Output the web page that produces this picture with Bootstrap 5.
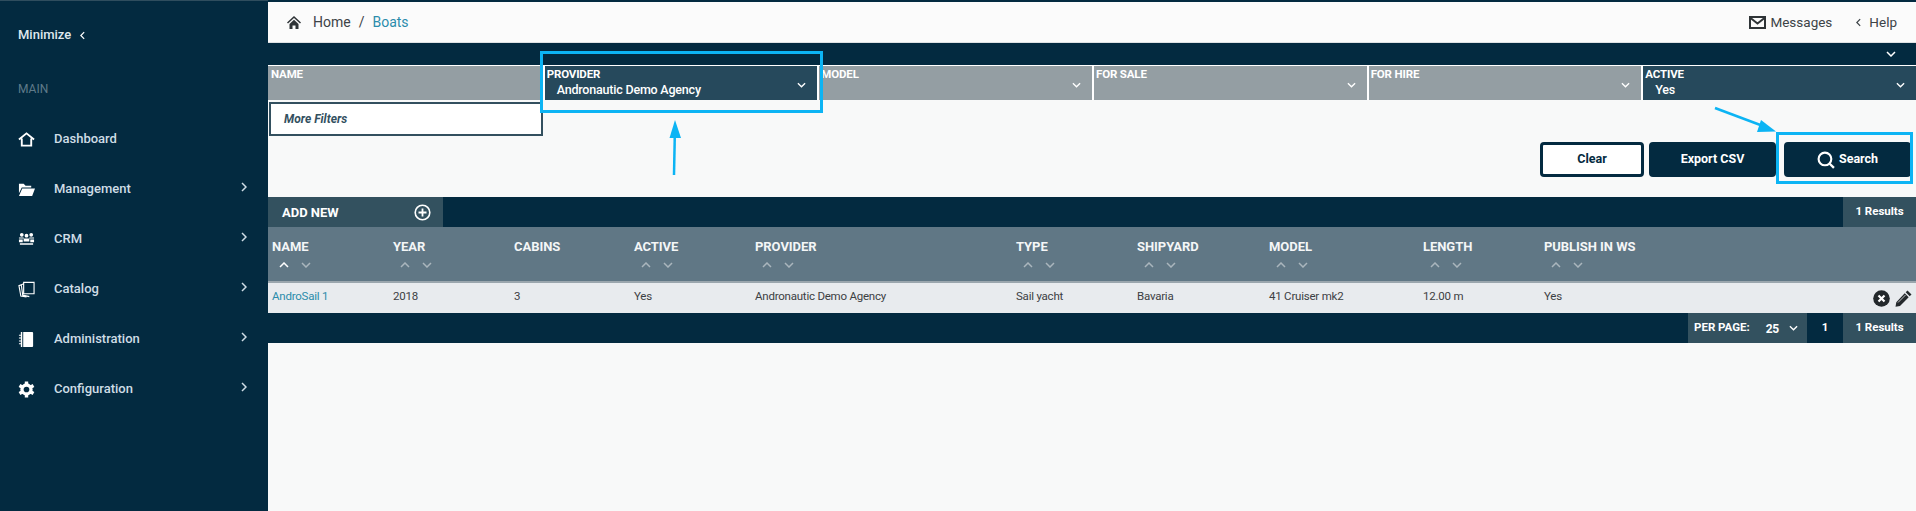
<!DOCTYPE html>
<html lang="en">
<head>
<meta charset="utf-8">
<title>Boats</title>
<link href="https://cdn.jsdelivr.net/npm/bootstrap@5.3.0/dist/css/bootstrap.min.css" rel="stylesheet">
<style>
html,body{height:100%;}
body{font-family:Roboto,"Liberation Sans",sans-serif;background:#f8f9f9;color:#3c4043;overflow:hidden;}
.app-shell{height:511px;position:relative;}
.side{width:268px;flex:none;background:#032a40;color:#cfdde6;border-top:1px solid #2f4d5e;font-weight:500;}
.side-min{height:70px;padding:26px 0 0 18px;font-size:13px;line-height:16px;color:#dfe8ee;}
.side-min svg{margin-left:9px;}
.side-label{font-size:12px;line-height:14px;color:#5f7a89;padding:11px 0 0 18px;height:43px;font-weight:400;}
.side-link{height:50px;padding:0 0 0 18px;color:#cfdde6;font-size:13px;position:relative;text-decoration:none;display:flex;align-items:center;}
.side-ico{width:17px;height:17px;margin-right:19px;flex:none;color:#fff;}
.side-chev{position:absolute;left:241px;top:18px;}
.topbar{height:41px;margin-top:2px;background:#fbfbfb;border-bottom:1px solid #dfe2e4;padding:0 19px 0 19px;font-size:13.5px;color:#3d4347;flex:none;}
.topbar .breadcrumb{--bs-breadcrumb-divider-color:#3d4347;--bs-breadcrumb-item-padding-x:.5rem;margin:0;font-size:14px;}
.topbar .breadcrumb a{color:#3d4347;text-decoration:none;}
.topbar .breadcrumb .active{color:#2b8cab;}
.main-top-edge{position:absolute;left:268px;right:0;top:0;height:2px;background:#032a40;}
.strip{height:22px;background:#032a40;flex:none;padding-right:20px;color:#fff;}
.filter-row{--bs-gutter-x:0;margin:0;flex:none;}
.fcell{height:35px;background:#949ea3;border-top:1px solid #fff;border-left:2px solid #fff;color:#fff;padding:2px 0 0 2px;font-size:11.5px;line-height:13px;font-weight:700;letter-spacing:-.15px;position:relative;}
.filter-row>div:first-child .fcell{border-left:0;padding-left:3px;}
.fcell.on{background:#26495c;}
.fval{font-size:12.5px;line-height:15px;padding-left:10px;margin-top:1px;font-weight:500;letter-spacing:-.2px;}
.fcell svg{position:absolute;right:11px;top:16px;}
.more-btn{width:274px;height:34px;margin:2px 0 0 1px;background:#fff;border:2px solid #33505f;border-radius:0;color:#33505f;font-style:italic;font-weight:700;font-size:12px;text-align:left;padding:0 13px;flex:none;}
.btn-bar{margin-top:6px;height:35px;padding-right:5px;flex:none;}
.act-btn{height:35px;background:#032a40;border:2px solid #032a40;color:#fff;font-size:12.5px;font-weight:700;border-radius:4px;padding:0;width:127px;}
.act-btn:hover{background:#032a40;color:#fff;border-color:#032a40;}
.act-clear{background:#fff;color:#032a40;width:104px;border-width:3px;margin-right:5px;}
.act-clear:hover{background:#fff;color:#032a40;}
.table-bar{height:30px;margin-top:20px;background:#032a40;color:#fff;flex:none;}
.add-new{width:175px;background:#33515f;font-size:13px;font-weight:700;padding:1px 12px 0 14px;}
.res{background:#33515f;width:73px;font-size:11.5px;font-weight:700;}
.grid-tbl{table-layout:fixed;width:1648px;margin:0;--bs-table-bg:transparent;--bs-table-color:#3c4043;}
.grid-tbl th{background:#607785;color:#f4f6f7;font-size:13px;line-height:16px;font-weight:700;letter-spacing:-.05px;padding:12px 0 0 4px;height:55px;vertical-align:top;border-bottom:2px solid #9aa6ad;}
.grid-tbl td{background:#e8ebee;font-size:11.5px;letter-spacing:-.22px;padding:0 0 2px 4px;height:31px;vertical-align:middle;border:0;color:#3c4043;}
.grid-tbl td a{color:#2b8cab;text-decoration:none;}
.grid-tbl col:nth-child(1),.grid-tbl col:nth-child(2),.grid-tbl col:nth-child(4),.grid-tbl col:nth-child(6),.grid-tbl col:nth-child(9){width:121px;}
.grid-tbl col:nth-child(3){width:120px;}
.grid-tbl col:nth-child(5){width:261px;}
.grid-tbl col:nth-child(7){width:132px;}
.grid-tbl col:nth-child(8){width:154px;}
.grid-tbl col:nth-child(10){width:126px;}
.sort-pair{display:flex;gap:12px;margin:7px 0 0 7px;height:8px;color:#aab6bd;}
.sort-pair .lit{color:#fff;}
.row-acts{padding:2px 4px 0 0;gap:5px;}
.foot-bar{height:30px;background:#032a40;color:#fff;flex:none;font-size:11.5px;font-weight:700;}
.per-page{width:119px;background:#33515f;padding-left:6px;}
.per-val{margin:2px 10px 0 16px;font-size:12px;letter-spacing:-.3px;}
.page-num{width:36px;}
.note-box{position:absolute;border:3px solid #0cb4f4;pointer-events:none;}
.note-a{left:540px;top:51px;width:283px;height:62px;}
.note-b{left:1776px;top:132px;width:137px;height:52px;}
.note-arrow{position:absolute;left:660px;top:100px;width:1140px;height:90px;pointer-events:none;}
</style>
</head>
<body>
<svg width="0" height="0" class="position-absolute">
<symbol id="ch-d" viewBox="0 0 10 6"><path d="M1 1l4 4 4-4" fill="none" stroke="currentColor" stroke-width="1.500"/></symbol>
<symbol id="ch-u" viewBox="0 0 10 6"><path d="M1 5l4-4 4 4" fill="none" stroke="currentColor" stroke-width="1.500"/></symbol>
<symbol id="ch-r" viewBox="0 0 6 10"><path d="M1 1l4 4-4 4" fill="none" stroke="currentColor" stroke-width="1.500"/></symbol>
<symbol id="ch-l" viewBox="0 0 6 10"><path d="M5 1L1 5l4 4" fill="none" stroke="currentColor" stroke-width="1.500"/></symbol>
</svg>
<div class="app-shell d-flex">
  <aside class="side d-flex flex-column">
    <div class="side-min">Minimize<svg width="5" height="9" class="text-white"><use href="#ch-l"/></svg></div>
    <div class="side-label">MAIN</div>
    <nav class="nav flex-column">
      <a class="side-link" href="#"><svg class="side-ico" viewBox="0 0 18 18"><path d="M1 9l8-6.500L17 9M4 8v7.500h10V8" fill="none" stroke="currentColor" stroke-width="2"/></svg>Dashboard</a>
      <a class="side-link" href="#"><svg class="side-ico" viewBox="0 0 18 18"><path d="M1 3h5l2 2h6v2H4L1 13zM4.500 8H18l-3 8H1z" fill="currentColor"/></svg>Management<svg class="side-chev" width="6" height="10"><use href="#ch-r"/></svg></a>
      <a class="side-link" href="#"><svg class="side-ico" viewBox="0 0 18 18"><path d="M4 2a2 2 0 110 4 2 2 0 010-4zm10 0a2 2 0 110 4 2 2 0 010-4zM9 3a2 2 0 110 4 2 2 0 010-4zM1 7h5v1H1zm11 0h5v1h-5zM6 8h6v3H6zM1 9h4v3H1zm12 0h4v3h-4zM2 13h14v1.500H2z" fill="currentColor"/></svg>CRM<svg class="side-chev" width="6" height="10"><use href="#ch-r"/></svg></a>
      <a class="side-link" href="#"><svg class="side-ico" viewBox="0 0 18 18"><path d="M6 1.500h11v12H6zM6 3L3.500 4l1.500 11 7 1.500M3.500 4L1 5l2 11 6 1" fill="none" stroke="currentColor" stroke-width="1.200"/></svg>Catalog<svg class="side-chev" width="6" height="10"><use href="#ch-r"/></svg></a>
      <a class="side-link" href="#"><svg class="side-ico" viewBox="0 0 18 18"><path d="M3 1h12a1 1 0 011 1v14a1 1 0 01-1 1H3V14H1v-1h2v-2H1v-1h2V8H1V7h2V5H1V4h2z" fill="currentColor"/><path d="M5 1v16" stroke="#032a40" stroke-width="1"/></svg>Administration<svg class="side-chev" width="6" height="10"><use href="#ch-r"/></svg></a>
      <a class="side-link" href="#"><svg class="side-ico" viewBox="0 0 18 18"><g fill="currentColor"><circle cx="9" cy="9" r="6.500"/><g stroke="currentColor" stroke-width="3.600"><path d="M9 .5v17M1.600 4.750l14.800 8.500M1.600 13.250l14.800-8.500"/></g></g><circle cx="9" cy="9" r="3" fill="#032a40"/></svg>Configuration<svg class="side-chev" width="6" height="10"><use href="#ch-r"/></svg></a>
    </nav>
  </aside>
  <div class="main-top-edge"></div>
  <main class="flex-grow-1 d-flex flex-column">
    <div class="topbar d-flex align-items-center justify-content-between">
      <div class="d-flex align-items-center">
        <svg width="14" height="13" viewBox="0 0 14 13" class="topbar-home me-2"><path d="M7 0L0 6.500l1 1L7 2l6 5.500 1-1zM2.500 8L7 3.800 11.500 8v5H8.500V9.500h-3V13h-3z" fill="#2f3437"/></svg>
        <ol class="breadcrumb ms-1">
          <li class="breadcrumb-item"><a href="#">Home</a></li>
          <li class="breadcrumb-item active">Boats</li>
        </ol>
      </div>
      <div class="d-flex align-items-center">
        <svg width="17" height="13" viewBox="0 0 17 13" class="me-1"><rect x="1" y="1" width="15" height="11" fill="none" stroke="#2f3437" stroke-width="2"/><path d="M1.500 2l7 5.500 7-5.500" fill="none" stroke="#2f3437" stroke-width="2"/></svg>
        <span>Messages</span>
        <svg width="5" height="9" class="ms-4 me-2"><use href="#ch-l"/></svg>
        <span>Help</span>
      </div>
    </div>
    <div class="strip d-flex justify-content-end align-items-center"><svg width="10" height="6"><use href="#ch-d"/></svg></div>
    <div class="row filter-row">
      <div class="col-2"><div class="fcell">NAME</div></div>
      <div class="col-2"><div class="fcell on">PROVIDER<div class="fval">Andronautic Demo Agency</div><svg width="9" height="6"><use href="#ch-d"/></svg></div></div>
      <div class="col-2"><div class="fcell">MODEL<svg width="9" height="6"><use href="#ch-d"/></svg></div></div>
      <div class="col-2"><div class="fcell">FOR SALE<svg width="9" height="6"><use href="#ch-d"/></svg></div></div>
      <div class="col-2"><div class="fcell">FOR HIRE<svg width="9" height="6"><use href="#ch-d"/></svg></div></div>
      <div class="col-2"><div class="fcell on">ACTIVE<div class="fval">Yes</div><svg width="9" height="6"><use href="#ch-d"/></svg></div></div>
    </div>
    <button type="button" class="btn more-btn">More Filters</button>
    <div class="btn-bar d-flex justify-content-end">
      <button type="button" class="btn act-btn act-clear">Clear</button>
      <button type="button" class="btn act-btn me-2">Export CSV</button>
      <button type="button" class="btn act-btn d-flex align-items-center justify-content-center"><svg width="18" height="18" viewBox="0 0 17 17" class="me-1"><circle cx="7.500" cy="7.500" r="6" fill="none" stroke="#fff" stroke-width="2"/><path d="M12 12l4 4" stroke="#fff" stroke-width="2.200"/></svg>Search</button>
    </div>
    <div class="table-bar d-flex justify-content-between">
      <div class="add-new d-flex align-items-center justify-content-between"><span>ADD NEW</span><svg width="17" height="17" viewBox="0 0 17 17"><circle cx="8.500" cy="8.500" r="7.300" fill="none" stroke="#fff" stroke-width="1.600"/><path d="M8.500 4.500v8M4.500 8.500h8" stroke="#fff" stroke-width="1.800"/></svg></div>
      <div class="res d-flex align-items-center justify-content-center">1 Results</div>
    </div>
    <table class="table grid-tbl">
      <colgroup><col><col><col><col><col><col><col><col><col><col><col></colgroup>
      <thead><tr>
        <th>NAME<div class="sort-pair"><svg width="10" height="6" class="lit"><use href="#ch-u"/></svg><svg width="10" height="6"><use href="#ch-d"/></svg></div></th>
        <th>YEAR<div class="sort-pair"><svg width="10" height="6"><use href="#ch-u"/></svg><svg width="10" height="6"><use href="#ch-d"/></svg></div></th>
        <th>CABINS</th>
        <th>ACTIVE<div class="sort-pair"><svg width="10" height="6"><use href="#ch-u"/></svg><svg width="10" height="6"><use href="#ch-d"/></svg></div></th>
        <th>PROVIDER<div class="sort-pair"><svg width="10" height="6"><use href="#ch-u"/></svg><svg width="10" height="6"><use href="#ch-d"/></svg></div></th>
        <th>TYPE<div class="sort-pair"><svg width="10" height="6"><use href="#ch-u"/></svg><svg width="10" height="6"><use href="#ch-d"/></svg></div></th>
        <th>SHIPYARD<div class="sort-pair"><svg width="10" height="6"><use href="#ch-u"/></svg><svg width="10" height="6"><use href="#ch-d"/></svg></div></th>
        <th>MODEL<div class="sort-pair"><svg width="10" height="6"><use href="#ch-u"/></svg><svg width="10" height="6"><use href="#ch-d"/></svg></div></th>
        <th>LENGTH<div class="sort-pair"><svg width="10" height="6"><use href="#ch-u"/></svg><svg width="10" height="6"><use href="#ch-d"/></svg></div></th>
        <th>PUBLISH IN WS<div class="sort-pair"><svg width="10" height="6"><use href="#ch-u"/></svg><svg width="10" height="6"><use href="#ch-d"/></svg></div></th>
        <th></th>
      </tr></thead>
      <tbody><tr>
        <td><a href="#">AndroSail 1</a></td><td>2018</td><td>3</td><td>Yes</td><td>Andronautic Demo Agency</td><td>Sail yacht</td><td>Bavaria</td><td>41 Cruiser mk2</td><td>12.00 m</td><td>Yes</td>
        <td><div class="row-acts d-flex justify-content-end align-items-center">
          <svg width="17" height="17" viewBox="0 0 17 17"><circle cx="8.500" cy="8.500" r="8.300" fill="#23282b"/><path d="M5.500 5.500l6 6M11.500 5.500l-6 6" stroke="#fff" stroke-width="2.200"/></svg>
          <svg width="17" height="17" viewBox="0 0 17 17"><path d="M12.500 0.500l4 4-1.800 1.800-4-4zM9.700 3.300l4 4L5 16l-4.500.8.800-4.600z" fill="#23282b"/><path d="M3 12.500l7.500-7.500" stroke="#e8ebee" stroke-width=".8"/></svg>
        </div></td>
      </tr></tbody>
    </table>
    <div class="foot-bar d-flex justify-content-end">
      <div class="per-page d-flex align-items-center">PER PAGE:<span class="per-val">25</span><svg width="9" height="6"><use href="#ch-d"/></svg></div>
      <div class="page-num d-flex align-items-center justify-content-center">1</div>
      <div class="res d-flex align-items-center justify-content-center">1 Results</div>
    </div>
  </main>
  <div class="note-box note-a"></div>
  <div class="note-box note-b"></div>
  <svg class="note-arrow" viewBox="660 100 1140 90"><path d="M674 175l.8-40" stroke="#0cb4f4" stroke-width="2.500" fill="none"/><path d="M675 120l-5.500 18h11.500z" fill="#0cb4f4"/><path d="M1715 108l48 18" stroke="#0cb4f4" stroke-width="2.500" fill="none"/><path d="M1776 131.500l-19 .5 4-12z" fill="#0cb4f4"/></svg>
</div>
<script src="https://cdn.jsdelivr.net/npm/bootstrap@5.3.0/dist/js/bootstrap.bundle.min.js"></script>
</body>
</html>
